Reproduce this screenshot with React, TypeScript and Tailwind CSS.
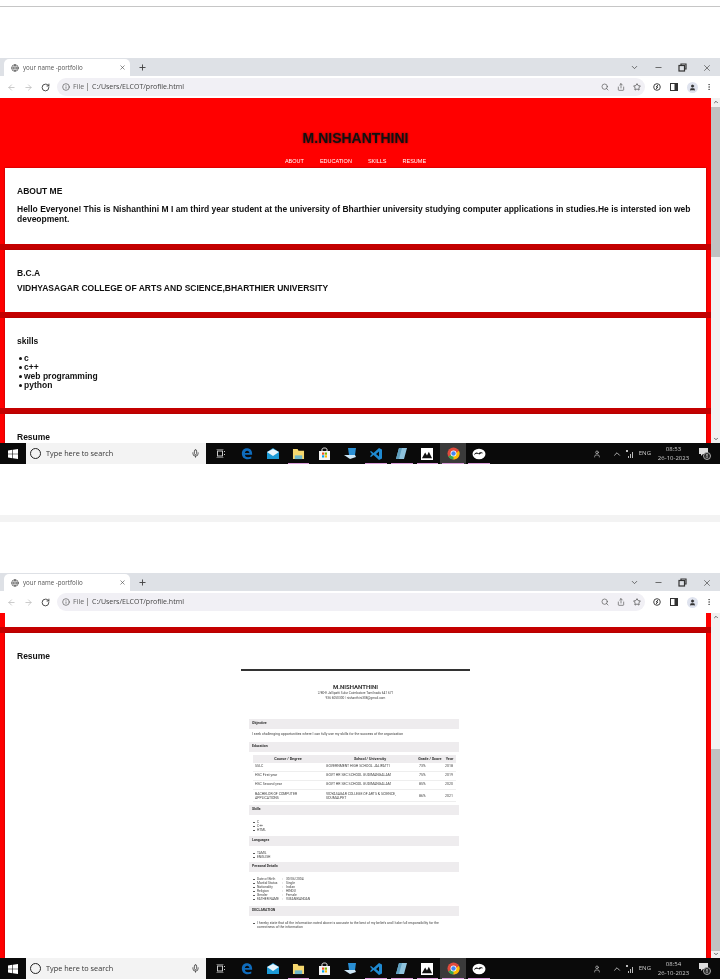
import React from "react";
import {
  ArrowLeft,
  ArrowRight,
  RotateCw,
  Info,
  Search,
  Share,
  Star,
  X,
  Plus,
  ChevronDown,
  ChevronUp,
  Minus,
  Globe,
  MoreVertical,
  User,
  Mic,
} from "lucide-react";

const arial = "font-['Liberation_Sans',Arial,sans-serif]";

const WindowsLogo = () => (
  <svg width="10" height="10" viewBox="0 0 10 10">
    <path d="M0 1.4 4.4.8v3.9H0zM5 .7 10 0v4.7H5zM0 5.3h4.4v3.9L0 8.6zM5 5.3h5V10l-5-.7z" fill="#fff" />
  </svg>
);

const Edge = () => (
  <svg width="12" height="13" viewBox="0 0 14 14">
    <path d="M1 7C1 3 3.800 1 7 1c3.600 0 6 2.500 6 6.500v1H4.500c.2 2 1.800 2.900 3.700 2.900 1.500 0 2.800-.4 3.800-1v2.400c-1.200.6-2.700.9-4.200.9C3.500 13.700 1 11 1 7zm3.500-.6h5.300C9.700 4.800 8.800 3.700 7.200 3.700 5.700 3.700 4.700 4.800 4.500 6.400z" fill="#0f6cbd" />
  </svg>
);

const Mail = () => (
  <svg width="14" height="13" viewBox="0 0 14 13">
    <path d="M1 5 7 1l6 4v7H1z" fill="#1b9ad6" />
    <path d="M1 5l6 4 6-4-6-3z" fill="#e8f4fb" />
  </svg>
);

const Folder = () => (
  <svg width="13" height="12" viewBox="0 0 14 13">
    <path d="M1 1h5l1 2h6v9H1z" fill="#f5d76e" />
    <rect x="3" y="8" width="8" height="4" fill="#6fb7c9" />
  </svg>
);

const Store = () => (
  <svg width="13" height="14" viewBox="0 0 13 14">
    <path d="M1 4h11v9H1z" fill="#f4f4f4" />
    <path d="M4 4V2.500C4 1.500 5 1 6.500 1S9 1.500 9 2.500V4" stroke="#f4f4f4" fill="none" />
    <rect x="4" y="5.500" width="2.200" height="2.200" fill="#f25022" />
    <rect x="6.800" y="5.500" width="2.200" height="2.200" fill="#7fba00" />
    <rect x="4" y="8.300" width="2.200" height="2.200" fill="#00a4ef" />
    <rect x="6.800" y="8.300" width="2.200" height="2.200" fill="#ffb900" />
  </svg>
);

const Laptop = () => (
  <svg width="14" height="13" viewBox="0 0 14 13">
    <path d="M5 1h8l-1 7H6z" fill="#2a8fd4" />
    <path d="M1 8l5 0 6 0 1 2-6 2z" fill="#cfe8f7" />
  </svg>
);

const VsCode = () => (
  <svg width="14" height="14" viewBox="0 0 14 14">
    <path d="M10 1l3 1.500v9L10 13 4.500 8 2 10 1 9.200 3 7 1 4.800 2 4l2.500 2zM10 4.500 7 7l3 2.500z" fill="#1f8ad2" />
  </svg>
);

const Notepad = () => (
  <svg width="13" height="14" viewBox="0 0 13 14">
    <path d="M4 1h8l-3 11H1z" fill="#8fc3dd" />
    <path d="M4 1h3L4 12H1z" fill="#5f9fbf" />
  </svg>
);

const Photos = () => (
  <svg width="12" height="12" viewBox="0 0 13 13">
    <rect width="13" height="13" fill="#fff" />
    <path d="M1 11l3.500-6 2 3 2-4 3.500 7z" fill="#111" />
  </svg>
);

const Chrome = () => (
  <svg width="13" height="13" viewBox="0 0 14 14">
    <circle cx="7" cy="7" r="6.500" fill="#e04a3c" />
    <path d="M7 7 1.400 10.200A6.500 6.500 0 0 0 7 13.500L10 7z" fill="#34a853" />
    <path d="M7 7l3-0.500 2.800-2.500A6.500 6.500 0 0 1 7 13.500z" fill="#fbbc05" />
    <circle cx="7" cy="7" r="3.200" fill="#fff" />
    <circle cx="7" cy="7" r="2.400" fill="#4285f4" />
  </svg>
);

const Cloud = () => (
  <svg width="14" height="12" viewBox="0 0 15 13">
    <ellipse cx="7.500" cy="6.500" rx="7" ry="5.800" fill="#fff" />
    <path d="M2 8c1-3 3-4 5-2 1-2 4-2 5 0-2-1-3 0-4 1-2-1-4-1-6 1z" fill="#111" />
  </svg>
);

const SectionBar = ({ label }: { label: string }) => (
  <div className="bg-[#eeecee] h-[10px] pl-[3px] flex items-center text-[3.500px] font-bold text-[#333]">
    {label}
  </div>
);

const TinyItem = ({ children }: { children: React.ReactNode }) => (
  <li className="flex leading-[4px] pl-[4px]">
    <span className="w-[1.500px] h-[1.500px] rounded-full bg-[#444] mt-[1.500px] mr-[2.500px] shrink-0" />
    <span>{children}</span>
  </li>
);

const Detail = ({ label, value }: { label: string; value: string }) => (
  <TinyItem>
    <span className="flex">
      <span className="w-[25px]">{label}</span>
      <span className="w-[4px]">:</span>
      <span>{value}</span>
    </span>
  </TinyItem>
);

const ResumeDoc = () => (
  <div className="w-[229px] mx-auto blur-[0.2px] font-['Roboto',sans-serif] text-[#444]">
    <div className="h-[2px] bg-[#333]" />
    <div className="text-center mt-[12px]">
      <p className="text-[6px] font-bold text-[#333] leading-[7px]">M.NISHANTHINI</p>
      <p className="text-[3.200px] leading-[5px] mt-[0.500px]">2/80-E Jallipatti Sulur Coimbatore Tamilnadu 641 671</p>
      <p className="text-[3.200px] leading-[5px]">936 6050300 | nishanthini308@gmail.com</p>
    </div>
    <div className="pl-[8px] pr-[11px] mt-[18px]">
      <SectionBar label="Objective" />
      <p className="text-[3.500px] px-[3px] h-[13px] flex items-center whitespace-nowrap">
        I seek challenging opportunities where I can fully use my skills for the success of the organization
      </p>
      <SectionBar label="Education" />
      <table className="w-[203px] ml-[4px] mt-[3px] text-[3.500px] border-collapse table-fixed">
        <thead>
          <tr className="bg-[#eeecee] text-[3.800px] text-[#333] h-[8px]">
            <th className="w-[70px] font-bold">Course / Degree</th>
            <th className="w-[94px] font-bold">School / University</th>
            <th className="w-[26px] font-bold whitespace-nowrap">Grade / Score</th>
            <th className="w-[13px] font-bold">Year</th>
          </tr>
        </thead>
        <tbody>
          <tr className="h-[9px] border-b border-[#eee]">
            <td className="pl-[2px]">SSLC</td>
            <td className="pl-[3px]">GOVERNMENT HIGH SCHOOL JALIPATTI</td>
            <td className="pl-[2px]">73%</td>
            <td className="pl-[2px]">2018</td>
          </tr>
          <tr className="h-[9px] border-b border-[#eee]">
            <td className="pl-[2px]">HSC First year</td>
            <td className="pl-[3px]">GOVT HR SEC SCHOOL GUDIMANGALAM</td>
            <td className="pl-[2px]">75%</td>
            <td className="pl-[2px]">2019</td>
          </tr>
          <tr className="h-[9px] border-b border-[#eee]">
            <td className="pl-[2px]">HSC Second year</td>
            <td className="pl-[3px]">GOVT HR SEC SCHOOL GUDIMANGALAM</td>
            <td className="pl-[2px]">85%</td>
            <td className="pl-[2px]">2020</td>
          </tr>
          <tr className="h-[12px] border-b border-[#eee] leading-[4px]">
            <td className="pl-[2px]">
              BACHELOR OF COMPUTER
              <br />
              APPLICATIONS
            </td>
            <td className="pl-[3px]">
              VIDYASAGAR COLLEGE OF ARTS &amp; SCIENCE,
              <br />
              UDUMALPET
            </td>
            <td className="pl-[2px]">86%</td>
            <td className="pl-[2px]">2021</td>
          </tr>
        </tbody>
      </table>
      <div className="mt-[3px]">
        <SectionBar label="Skills" />
      </div>
      <ul className="text-[3.300px] pt-[5px] pb-[4px]">
        <TinyItem>C</TinyItem>
        <TinyItem>C++</TinyItem>
        <TinyItem>HTML</TinyItem>
      </ul>
      <SectionBar label="Languages" />
      <ul className="text-[3.300px] pt-[5px] pb-[3px]">
        <TinyItem>TAMIL</TinyItem>
        <TinyItem>ENGLISH</TinyItem>
      </ul>
      <SectionBar label="Personal Details" />
      <ul className="text-[3.300px] pt-[5px] pb-[5px]">
        <Detail label="Date of Birth" value="30/06/2004" />
        <Detail label="Marital Status" value="Single" />
        <Detail label="Nationality" value="Indian" />
        <Detail label="Religion" value="HINDU" />
        <Detail label="Gender" value="Female" />
        <Detail label="FATHER NAME" value="V.MANIKANDAN" />
      </ul>
      <SectionBar label="DECLARATION" />
      <ul className="text-[3.400px] pt-[5px] pr-[12px]">
        <TinyItem>
          I hereby state that all the information noted above is accurate to the best of my beliefs and I take full
          responsibility for the correctness of the information
        </TinyItem>
      </ul>
    </div>
  </div>
);

const Card = ({ children, className }: { children?: React.ReactNode; className: string }) => (
  <section className={`bg-white mx-[5px] shadow-[0_0_2px_#a00000] ${className}`}>{children}</section>
);

const Band = () => <div className="h-[6px] bg-[#c40000] shrink-0" />;

const TabBar = () => (
  <div className="h-[18px] bg-[#dee1e6] flex items-end text-[#444] shrink-0">
    <div className="w-[126px] h-[17px] ml-[4px] bg-white rounded-t-[5px] flex items-center pl-[7px] pr-[4px]">
      <Globe size={8} className="text-[#444]" />
      <span className="ml-[4px] text-[6.200px] flex-1 text-[#555] font-['Open_Sans',sans-serif]">
        your name -portfolio
      </span>
      <X size={7} strokeWidth={2} />
    </div>
    <div className="h-[17px] flex items-center ml-[8px]">
      <Plus size={9} strokeWidth={2.500} />
    </div>
    <div className="flex-1" />
    <div className="h-[17px] flex items-center mr-[8px] gap-[15px]">
      <ChevronDown size={9} />
      <Minus size={9} strokeWidth={2} />
      <svg width="9" height="9" viewBox="0 0 9 9" fill="none" stroke="#333" strokeWidth="1.200">
        <rect x="1" y="2.500" width="5.500" height="5.500" />
        <path d="M3 2.500V1h5v5H6.500" />
      </svg>
      <X size={10} strokeWidth={1.600} />
    </div>
  </div>
);

const Toolbar = () => (
  <div className="h-[22px] bg-white flex items-center shrink-0 text-[#555]">
    <div className="w-[57px] flex items-center pl-[7px] gap-[8px]">
      <ArrowLeft size={9} className="text-[#bbb]" />
      <ArrowRight size={9} className="text-[#bbb]" />
      <RotateCw size={9} strokeWidth={2.500} className="text-[#444]" />
    </div>
    <div className="w-[588px] h-[18px] rounded-full bg-[#f1f0f5] flex items-center pl-[5px] pr-[4px] text-[7px] font-['Open_Sans',sans-serif]">
      <Info size={8} />
      <span className="ml-[3px] text-[#666]">File</span>
      <span className="w-px h-[8px] bg-[#999] mx-[3px]" />
      <span className="text-[#444] ml-[1px]">C:/Users/ELCOT/profile.html</span>
      <div className="flex-1" />
      <div className="flex items-center gap-[8px]">
        <Search size={8} />
        <Share size={8} />
        <Star size={8} className="text-[#333]" />
      </div>
    </div>
    <div className="flex items-center gap-[9px] ml-[8px] text-[#444]">
      <svg width="8" height="8" viewBox="0 0 8 8" fill="none" stroke="#444" strokeWidth="1">
        <circle cx="4" cy="4" r="3.300" />
        <path d="M5 2 3 4h2L3 6" />
      </svg>
      <svg width="8" height="8" viewBox="0 0 8 8">
        <rect x=".5" y=".5" width="7" height="7" fill="none" stroke="#333" />
        <rect x="4.500" y=".5" width="3" height="7" fill="#333" />
      </svg>
      <div className="w-[11px] h-[11px] rounded-full bg-[#dfe3ee] flex items-center justify-center">
        <User size={7} fill="#333" className="text-[#333]" />
      </div>
      <MoreVertical size={8} className="-ml-[2px]" />
    </div>
  </div>
);

const Scrollbar = ({ thumbTop, thumbHeight }: { thumbTop: string; thumbHeight: string }) => (
  <div className="w-[9px] bg-[#f1f1f1] flex flex-col items-center shrink-0">
    <ChevronUp size={6} strokeWidth={4} className="text-[#666] mt-[1px]" />
    <div className={`w-full bg-[#c1c1c1] ${thumbTop} ${thumbHeight}`} />
    <div className="flex-1" />
    <ChevronDown size={6} strokeWidth={4} className="text-[#666] mb-[1px]" />
  </div>
);

const Pin = ({ children, on = true, active = false }: { children: React.ReactNode; on?: boolean; active?: boolean }) => (
  <div className={`w-[25.800px] h-full flex items-center justify-center relative ${active ? "bg-[#3a3a3a]" : ""}`}>
    {children}
    {on && <span className="absolute bottom-0 left-[2px] right-[2px] h-px bg-[#d99ad9]" />}
  </div>
);

const Taskbar = ({ time }: { time: string }) => (
  <div className="h-[21px] bg-[#0a0a0a] flex items-center shrink-0 text-white">
    <div className="w-[26px] flex justify-center">
      <WindowsLogo />
    </div>
    <div className="w-[180px] h-full bg-[#f3f3f3] flex items-center pl-[4px] pr-[6px] text-[#333]">
      <span className="w-[11px] h-[11px] rounded-full border-[1.500px] border-[#222]" />
      <span className="ml-[5px] text-[7.300px] flex-1 font-['Open_Sans',sans-serif]">Type here to search</span>
      <Mic size={9} />
    </div>
    <div className="w-[28px] flex justify-center">
      <svg width="9" height="9" viewBox="0 0 9 9" fill="none" stroke="#ccc" strokeWidth="1">
        <rect x="1.500" y="2" width="5" height="5" />
        <path d="M.5 0h7M.5 9h7M8.500 2v1M8.500 5v1" />
      </svg>
    </div>
    <div className="flex h-full items-center">
      <Pin on={false}><Edge /></Pin>
      <Pin on={false}><Mail /></Pin>
      <Pin><Folder /></Pin>
      <Pin on={false}><Store /></Pin>
      <Pin on={false}><Laptop /></Pin>
      <Pin><VsCode /></Pin>
      <Pin><Notepad /></Pin>
      <Pin><Photos /></Pin>
      <Pin active><Chrome /></Pin>
      <Pin><Cloud /></Pin>
    </div>
    <div className="flex-1" />
    <div className="flex items-center text-[#ccc] font-['Open_Sans',sans-serif] pr-[9px]">
      <User size={8} />
      <ChevronUp size={10} className="ml-[11px]" />
      <svg width="8" height="8" viewBox="0 0 8 8" className="ml-[4px]">
        <path d="M0 0h2v2H0zM6 2h1v6H6zM4 4h1v4H4zM2 6h1v2H2z" fill="#bbb" />
      </svg>
      <span className="text-[6px] ml-[5px]">ENG</span>
      <div className="text-[6px] leading-[9px] text-center ml-[6px] w-[33px] whitespace-nowrap">
        <div>{time}</div>
        <div>26-10-2023</div>
      </div>
      <div className="ml-[9px] relative w-[12px] h-[12px]">
        <svg width="9" height="8" viewBox="0 0 9 8" className="absolute left-0 top-0">
          <path d="M0 0h9v6H4L2 8V6H0z" fill="#ddd" />
        </svg>
        <span className="absolute right-0 bottom-0 w-[8px] h-[8px] rounded-full bg-[#222] border border-[#aaa] text-[5px] leading-[6px] text-center">
          8
        </span>
      </div>
    </div>
  </div>
);

const Window = ({
  time,
  thumbTop,
  thumbHeight,
  children,
}: {
  time: string;
  thumbTop: string;
  thumbHeight: string;
  children: React.ReactNode;
}) => (
  <div className="h-[406px] flex flex-col">
    <TabBar />
    <Toolbar />
    <div className={`h-[345px] flex overflow-hidden ${arial}`}>
      <div className="flex-1 overflow-hidden">{children}</div>
      <Scrollbar thumbTop={thumbTop} thumbHeight={thumbHeight} />
    </div>
    <Taskbar time={time} />
  </div>
);

const Bullet = ({ text }: { text: string }) => (
  <li className="flex items-center pl-[2px]">
    <span className="w-[3px] h-[3px] rounded-full bg-[#111] mr-[2px] shrink-0" />
    <span>{text}</span>
  </li>
);

export default function App() {
  return (
    <div className="w-[720px] h-[980px] bg-white overflow-hidden blur-[0.3px]">
      <div className="h-px bg-[#c6c6c6] mt-[6px]" />
      <div className="mt-[51px]">
        <Window time="08:53" thumbTop="mt-[2px]" thumbHeight="h-[150px]">
          <div className="bg-[#ff0000] h-full">
            <header className="h-[70px] flex flex-col items-center pt-[32px]">
              <h1 className="text-[14px] leading-[16px] font-bold text-[#111] drop-shadow-[0_0_1px_rgba(90,0,0,0.8)]">
                M.NISHANTHINI
              </h1>
              <nav className="flex gap-[16px] text-[5.500px] leading-[8px] text-white mt-[11px]">
                <span>ABOUT</span>
                <span>EDUCATION</span>
                <span>SKILLS</span>
                <span>RESUME</span>
              </nav>
            </header>
            <div className="flex flex-col">
              <Card className="h-[76px] px-[12px] pt-[17px] text-[#111] font-bold text-[8.500px]">
                <h2 className="leading-[12px]">ABOUT ME</h2>
                <p className="leading-[10px] mt-[7px]">
                  Hello Everyone! This is Nishanthini M I am third year student at the university of Bharthier
                  university studying computer applications in studies.He is intersted ion web deveopment.
                </p>
              </Card>
              <Band />
              <Card className="h-[62px] px-[12px] pt-[17px] text-[#111] font-bold text-[8.500px]">
                <h2 className="leading-[12px]">B.C.A</h2>
                <p className="leading-[12px] mt-[3px]">
                  VIDHYASAGAR COLLEGE OF ARTS AND SCIENCE,BHARTHIER UNIVERSITY
                </p>
              </Card>
              <Band />
              <Card className="h-[90px] px-[12px] pt-[17px] text-[#111] font-bold text-[8.500px]">
                <h2 className="leading-[12px]">skills</h2>
                <ul className="mt-[7px] leading-[9px]">
                  <Bullet text="c" />
                  <Bullet text="c++" />
                  <Bullet text="web programming" />
                  <Bullet text="python" />
                </ul>
              </Card>
              <Band />
              <Card className="h-[60px] px-[12px] pt-[17px] text-[#111] font-bold text-[8.500px]">
                <h2 className="leading-[12px]">Resume</h2>
              </Card>
            </div>
          </div>
        </Window>
      </div>
      <div className="h-[7px] bg-[#f3f3f3] mt-[51px]" />
      <div className="mt-[51px]">
        <Window time="08:54" thumbTop="mt-[129px]" thumbHeight="h-[202px]">
          <div className="bg-[#ff0000] h-full flex flex-col">
            <div className="h-[14px] bg-white mx-[5px] shrink-0" />
            <Band />
            <Card className="flex-1 pt-[17px]">
              <h2 className="text-[8.500px] leading-[12px] font-bold text-[#111] px-[12px]">Resume</h2>
              <div className="mt-[7px]">
                <ResumeDoc />
              </div>
            </Card>
          </div>
        </Window>
      </div>
    </div>
  );
}
